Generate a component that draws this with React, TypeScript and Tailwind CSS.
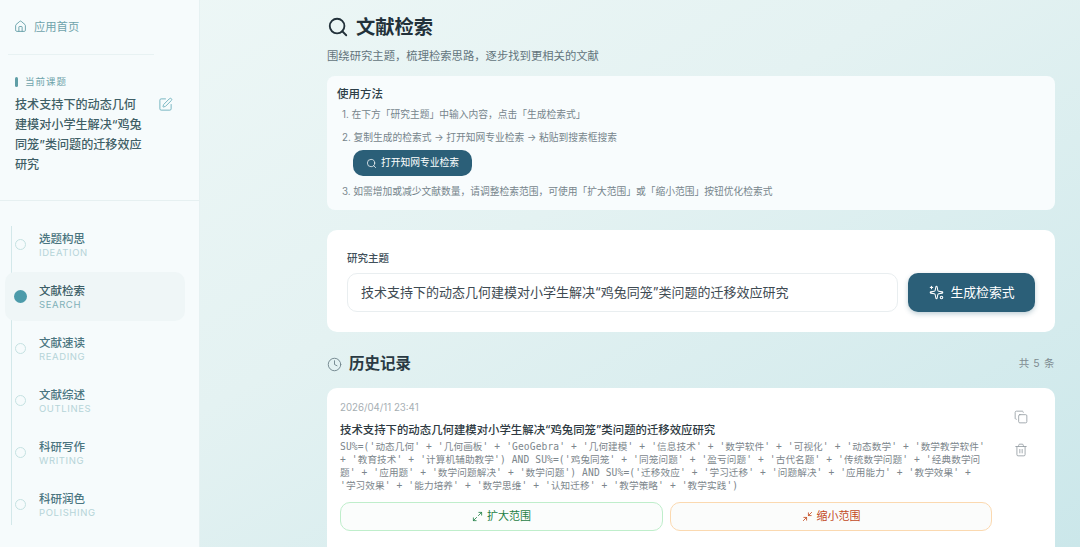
import { Clock, Copy, House, Maximize2, Minimize2, Search, Sparkles, SquarePen, Trash2 } from "lucide-react";

const font = "font-['Inter','Noto_Sans_CJK_SC',sans-serif]";

const steps = [
  { zh: "选题构思", en: "IDEATION" },
  { zh: "文献检索", en: "SEARCH", active: true },
  { zh: "文献速读", en: "READING" },
  { zh: "文献综述", en: "OUTLINES" },
  { zh: "科研写作", en: "WRITING" },
  { zh: "科研润色", en: "POLISHING" },
];

function Sidebar() {
  return (
    <aside className="w-[200px] h-full shrink-0 bg-[#f6fbfc] border-r border-[#e6f1f2] flex flex-col">
      <div className="flex gap-[7px] pl-[14px] pt-[19px] h-[54px] items-start text-[#6fa3ab]">
        <House size={13} strokeWidth={1.6} className="mt-[1px] text-[#5d9aa3]" />
        <span className="text-[11.3px] leading-[16px]">应用首页</span>
      </div>
      <div className="h-px w-[146px] ml-[8px] bg-[#e8f2f3]" />
      <div className="pl-[15px] pt-[20px] h-[146px] border-b border-[#e6f0f1]">
        <div className="flex items-center gap-[7px] text-[9.5px] leading-[13px] tracking-[1px] text-[#6fa3ab]">
          <span className="w-[3px] h-[10px] rounded-sm bg-[#5f9ea6]" />
          当前课题
        </div>
        <div className="flex mt-[7px]">
          <p className="w-[130px] text-[12.1px] leading-[20px] font-medium text-[#3f5f66]">
            技术支持下的动态几何建模对小学生解决“鸡兔同笼”类问题的迁移效应研究
          </p>
          <SquarePen size={15} strokeWidth={1.5} className="ml-[13px] mt-[2px] text-[#72b3bf]" />
        </div>
      </div>
      <nav className="relative flex flex-col pt-[19px] px-[5px]">
        <div className="absolute left-[11px] top-[25px] w-px h-[299px] bg-[#d3e8ea]" />
        {steps.map((s) => (
          <div
            key={s.en}
            className={`relative flex items-center h-[49px] mb-[3px] w-[180px] rounded-[10px] ${s.active ? "bg-[#eff6f7]" : ""}`}
          >
            {s.active ? (
              <span className="w-[13px] h-[13px] ml-[9px] rounded-full bg-[#4c9baa]" />
            ) : (
              <span className="w-[11px] h-[11px] ml-[10px] rounded-full border-[1.5px] border-[#c5e2e2] bg-[#f6fbfc]" />
            )}
            <div className={`pt-[2px] ${s.active ? "ml-[12px]" : "ml-[13px]"}`}>
              <div className={`text-[11.5px] leading-[15px] font-medium ${s.active ? "text-[#3d5f68]" : "text-[#4a7580]"}`}>{s.zh}</div>
              <div className={`text-[9.5px] leading-[12px] tracking-[0.6px] ${s.active ? "text-[#7fb0b8]" : "text-[#b5d4d8]"}`}>{s.en}</div>
            </div>
          </div>
        ))}
      </nav>
    </aside>
  );
}

function Guide() {
  return (
    <section className="h-[134px] rounded-[8px] bg-[#f8fcfd] pl-[10px] pt-[10px]">
      <h3 className="text-[11.5px] leading-[16px] font-medium text-[#2d3f48]">使用方法</h3>
      <ol className="text-[9.75px] text-[#76858c] pl-[5px]">
        <li className="mt-[6px] leading-[14px]">1. 在下方「研究主题」中输入内容，点击「生成检索式」</li>
        <li className="mt-[9px] leading-[14px]">2. 复制生成的检索式 → 打开知网专业检索 → 粘贴到搜索框搜索</li>
        <li className="mt-[5px] ml-[11px] w-[119px] h-[26px] rounded-[10px] bg-[#2b5f78] text-white flex items-center justify-center gap-[4px]">
          <Search size={11} strokeWidth={1.6} />
          打开知网专业检索
        </li>
        <li className="mt-[9px] leading-[14px]">3. 如需增加或减少文献数量，请调整检索范围，可使用「扩大范围」或「缩小范围」按钮优化检索式</li>
      </ol>
    </section>
  );
}

function TopicForm() {
  return (
    <section className="mt-[20px] h-[102px] rounded-[10px] bg-white pl-[20px] pr-[20px] pt-[21px]">
      <label className="block text-[10.5px] leading-[16px] font-medium text-[#41505a]">研究主题</label>
      <div className="flex gap-[10px] mt-[6px]">
        <div className="flex-1 h-[39px] rounded-[10px] border-[1.5px] border-[#e9eef0] pl-[13px] flex items-center text-[13px] text-[#3e4a52]">
          技术支持下的动态几何建模对小学生解决“鸡兔同笼”类问题的迁移效应研究
        </div>
        <button className="w-[127px] h-[39px] rounded-[10px] bg-[#2b5f78] text-white text-[12.8px] flex items-center justify-center gap-[7px] shadow-[0_2px_5px_rgba(43,95,120,0.3)]">
          <Sparkles size={15} strokeWidth={1.7} className="-scale-x-100" />
          生成检索式
        </button>
      </div>
    </section>
  );
}

function HistoryCard() {
  return (
    <section className="mt-[13px] h-[170px] rounded-[10px] bg-white pl-[13px] pr-[14px] pt-[13px] flex">
      <div className="w-[652px]">
        <div className="text-[9.7px] leading-[13px] text-[#a6aeb3]">2026/04/11 23:41</div>
        <h4 className="mt-[8px] text-[11.4px] leading-[16px] font-medium text-[#2e3a42]">
          技术支持下的动态几何建模对小学生解决“鸡兔同笼”类问题的迁移效应研究
        </h4>
        <p className="mt-[2px] w-[648px] font-['DejaVu_Sans_Mono','Noto_Sans_CJK_SC',monospace] text-[9.6px] leading-[13px] tracking-[0.12px] text-[#7c868c]">
          SU%=('动态几何' + '几何画板' + 'GeoGebra' + '几何建模' + '信息技术' + '数学软件' + '可视化' + '动态数学' + '数学教学软件' + '教育技术' + '计算机辅助教学') AND SU%=('鸡兔同笼' + '同笼问题' + '盈亏问题' + '古代名题' + '传统数学问题' + '经典数学问题' + '应用题' + '数学问题解决' + '数学问题') AND SU%=('迁移效应' + '学习迁移' + '问题解决' + '应用能力' + '教学效果' + '学习效果' + '能力培养' + '数学思维' + '认知迁移' + '教学策略' + '教学实践')
        </p>
        <div className="flex gap-[7px] mt-[10px]">
          <button className="w-[323px] h-[29px] rounded-[10px] border-[1.5px] border-[#bfeecb] bg-[#fbfdfc] text-[#1f7f45] text-[11px] flex items-center justify-center gap-[4px]">
            <Maximize2 size={11} strokeWidth={1.8} />
            扩大范围
          </button>
          <button className="w-[322px] h-[29px] rounded-[10px] border-[1.5px] border-[#fbd9b0] bg-[#fbfcfb] text-[#c2491d] text-[11px] flex items-center justify-center gap-[4px]">
            <Minimize2 size={11} strokeWidth={1.8} />
            缩小范围
          </button>
        </div>
      </div>
      <div className="ml-[22px] flex flex-col items-center gap-[19px] pt-[9px] text-[#929ba0]">
        <Copy size={14} strokeWidth={1.4} />
        <Trash2 size={14} strokeWidth={1.4} />
      </div>
    </section>
  );
}

export default function App() {
  return (
    <div className={`${font} flex w-[1080px] h-[547px] overflow-hidden bg-[linear-gradient(150deg,#eff8f7_0%,#e4f2f2_45%,#cbe7ea_100%)]`}>
      <Sidebar />
      <main className="w-[880px] pl-[127px] pr-[25px]">
        <div className="pt-[14px] flex items-center h-[40px] gap-[7px] text-[#22313a]">
          <Search size={22} strokeWidth={2} className="text-[#22313a]" />
          <h1 className="text-[19.3px] leading-[26px] font-semibold">文献检索</h1>
        </div>
        <p className="mt-[8px] text-[11.33px] leading-[16px] text-[#63747c]">围绕研究主题，梳理检索思路，逐步找到更相关的文献</p>
        <div className="mt-[12px]">
          <Guide />
          <TopicForm />
        </div>
        <div className="flex items-center justify-between mt-[21px] h-[22px]">
          <div className="flex items-center gap-[7px]">
            <Clock size={15} strokeWidth={1.5} className="text-[#71858d]" />
            <h2 className="text-[15.5px] font-semibold text-[#2a3a43]">历史记录</h2>
          </div>
          <span className="text-[10.5px] tracking-[0.6px] text-[#7d8a90]">共 5 条</span>
        </div>
        <HistoryCard />
      </main>
    </div>
  );
}
